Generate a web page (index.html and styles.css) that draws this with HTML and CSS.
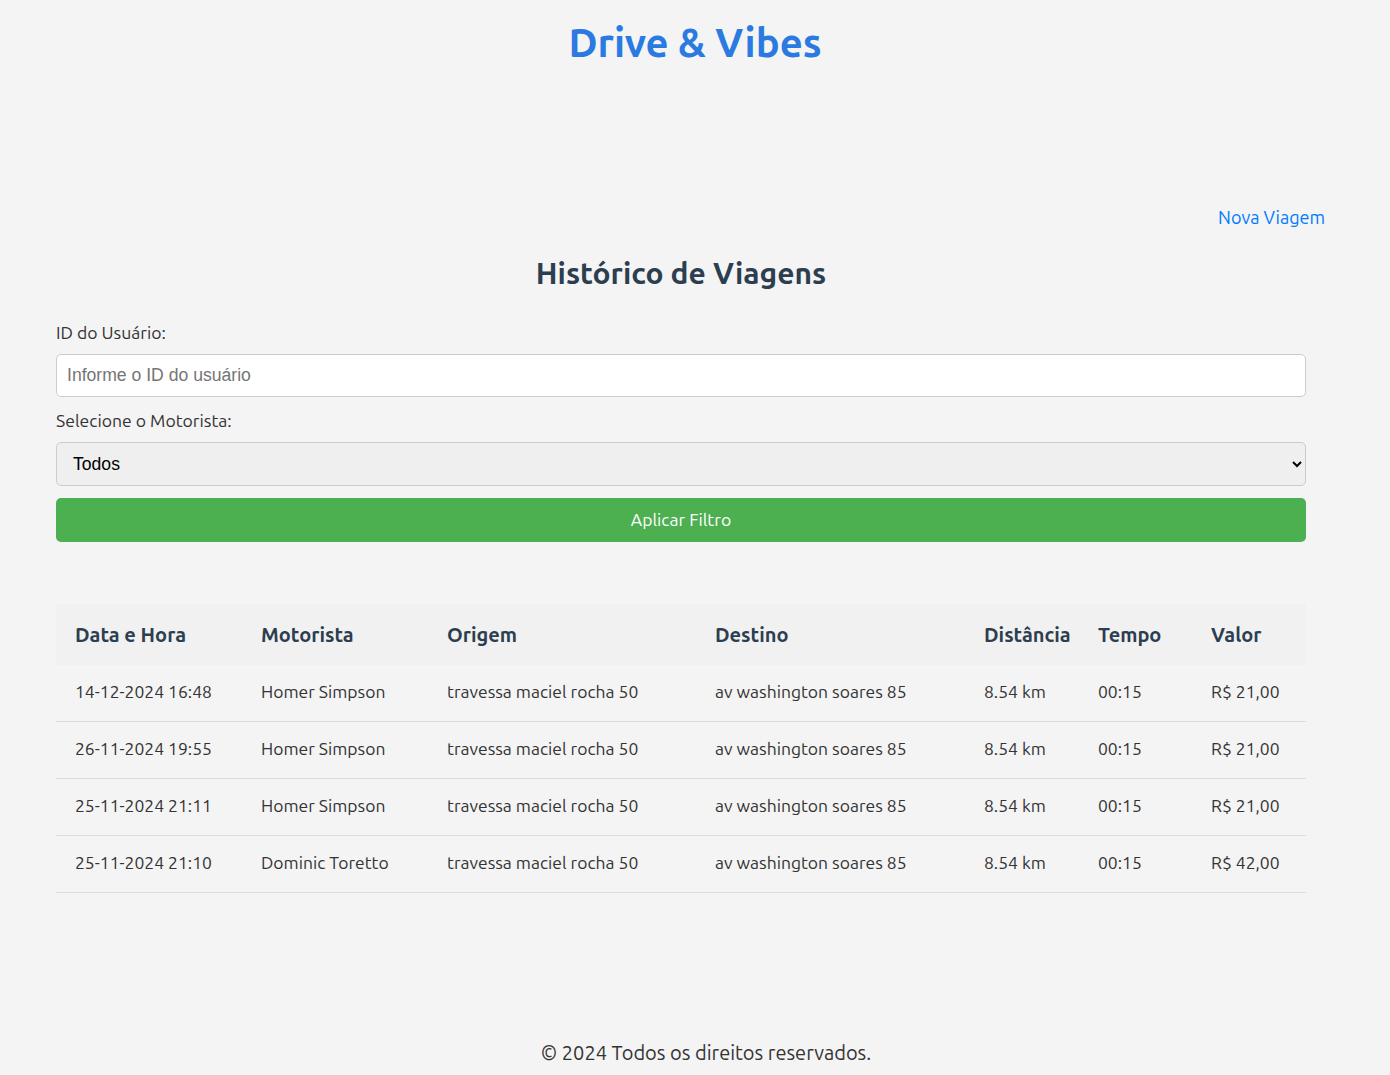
FILE: index.html
```html
<!DOCTYPE html>
<html lang="pt-BR">
<head>
<meta charset="utf-8">
<title>Drive &amp; Vibes</title>
<link rel="stylesheet" href="styles.css">
</head>
<body>
<header class="site-header">
  <h1 class="brand">Drive &amp; Vibes</h1>
</header>
<nav class="top-nav">
  <a class="nav-link" href="#">Nova Viagem</a>
</nav>
<main class="main">
  <h2 class="page-title">Histórico de Viagens</h2>
  <form class="filter-form">
    <label class="field-label" for="uid">ID do Usuário:</label>
    <input class="text-input" id="uid" type="text" placeholder="Informe o ID do usuário">
    <label class="field-label" for="drv">Selecione o Motorista:</label>
    <select class="select-input" id="drv">
      <option>Todos</option>
    </select>
    <button class="apply-btn" type="button">Aplicar Filtro</button>
  </form>
  <table class="trips">
    <colgroup>
      <col class="c-date"><col class="c-driver"><col class="c-orig"><col class="c-dest"><col class="c-dist"><col class="c-time"><col class="c-val">
    </colgroup>
    <thead>
      <tr><th>Data e Hora</th><th>Motorista</th><th>Origem</th><th>Destino</th><th>Distância</th><th>Tempo</th><th>Valor</th></tr>
    </thead>
    <tbody>
      <tr><td>14-12-2024 16:48</td><td>Homer Simpson</td><td>travessa maciel rocha 50</td><td>av washington soares 85</td><td>8.54 km</td><td>00:15</td><td>R$ 21,00</td></tr>
      <tr><td>26-11-2024 19:55</td><td>Homer Simpson</td><td>travessa maciel rocha 50</td><td>av washington soares 85</td><td>8.54 km</td><td>00:15</td><td>R$ 21,00</td></tr>
      <tr><td>25-11-2024 21:11</td><td>Homer Simpson</td><td>travessa maciel rocha 50</td><td>av washington soares 85</td><td>8.54 km</td><td>00:15</td><td>R$ 21,00</td></tr>
      <tr><td>25-11-2024 21:10</td><td>Dominic Toretto</td><td>travessa maciel rocha 50</td><td>av washington soares 85</td><td>8.54 km</td><td>00:15</td><td>R$ 42,00</td></tr>
    </tbody>
  </table>
</main>
<footer class="site-footer">© 2024 Todos os direitos reservados.</footer>
</body>
</html>
```

FILE: styles.css
```css
* { box-sizing: border-box; }
html, body { margin: 0; padding: 0; }
body {
  background: #f4f4f4;
  font-family: "Ubuntu", "Noto Sans", "Open Sans", sans-serif;
  color: #333;
  min-height: 1075px;
  display: flex;
  flex-direction: column;
}
.site-header {
  text-align: center;
  padding-top: 18px;
}
.brand {
  margin: 0;
  font-size: 40px;
  line-height: 50px;
  font-weight: 700;
  color: #2a7ae2;
}
.top-nav {
  display: flex;
  justify-content: flex-end;
  padding: 0 65px 0 0;
  margin-top: 138px;
}
.nav-link {
  color: #007bff;
  text-decoration: none;
  font-size: 18px;
  line-height: 22px;
}
.main {
  padding: 0 84px 0 56px;
}
.page-title {
  margin: 26px 0 0;
  text-align: center;
  font-size: 30px;
  line-height: 38px;
  font-weight: 700;
  color: #2c3e50;
}
.filter-form {
  display: flex;
  flex-direction: column;
  margin-top: 30px;
}
.field-label {
  font-size: 17.6px;
  line-height: 22px;
  color: #333;
  margin-bottom: 10px;
}
.text-input {
  height: 43px;
  border: 1px solid #ccc;
  border-radius: 5px;
  background: #fff;
  padding: 0 10px;
  font-family: "Liberation Sans", Arial, sans-serif;
  font-size: 17.6px;
  color: #333;
  margin-bottom: 13px;
}
.text-input::placeholder { color: #757575; }
.select-input {
  height: 44px;
  border: 1px solid #ccc;
  border-radius: 5px;
  background: #efefef;
  padding: 0 12px;
  font-family: "Liberation Sans", Arial, sans-serif;
  font-size: 17.6px;
  color: #000;
  margin-bottom: 12px;
}
.apply-btn {
  height: 44px;
  border: none;
  border-radius: 5px;
  background: #4caf50;
  color: #fff;
  font-family: "Ubuntu", "Noto Sans", "Open Sans", sans-serif;
  font-size: 17.6px;
  padding: 0 0 2px;
}
.trips {
  margin-top: 62px;
  width: 100%;
  border-collapse: collapse;
  table-layout: fixed;
}
.c-date { width: 186px; }
.c-driver { width: 186px; }
.c-orig { width: 268px; }
.c-dest { width: 269px; }
.c-dist { width: 114px; }
.c-time { width: 113px; }
.c-val { width: 114px; }
.trips th {
  background: #f1f1f1;
  text-align: left;
  font-size: 20px;
  line-height: 22px;
  font-weight: 700;
  color: #2c3e50;
  padding: 20px 0 19px 19px;
  white-space: nowrap;
}
.trips td {
  font-size: 17.5px;
  line-height: 20px;
  color: #333;
  padding: 17px 0 19px 19px;
  border-bottom: 1px solid #ddd;
  white-space: nowrap;
}
.site-footer {
  margin-top: auto;
  padding: 0 0 9px 22px;
  text-align: center;
  font-size: 20px;
  line-height: 26px;
  color: #333;
}
```
